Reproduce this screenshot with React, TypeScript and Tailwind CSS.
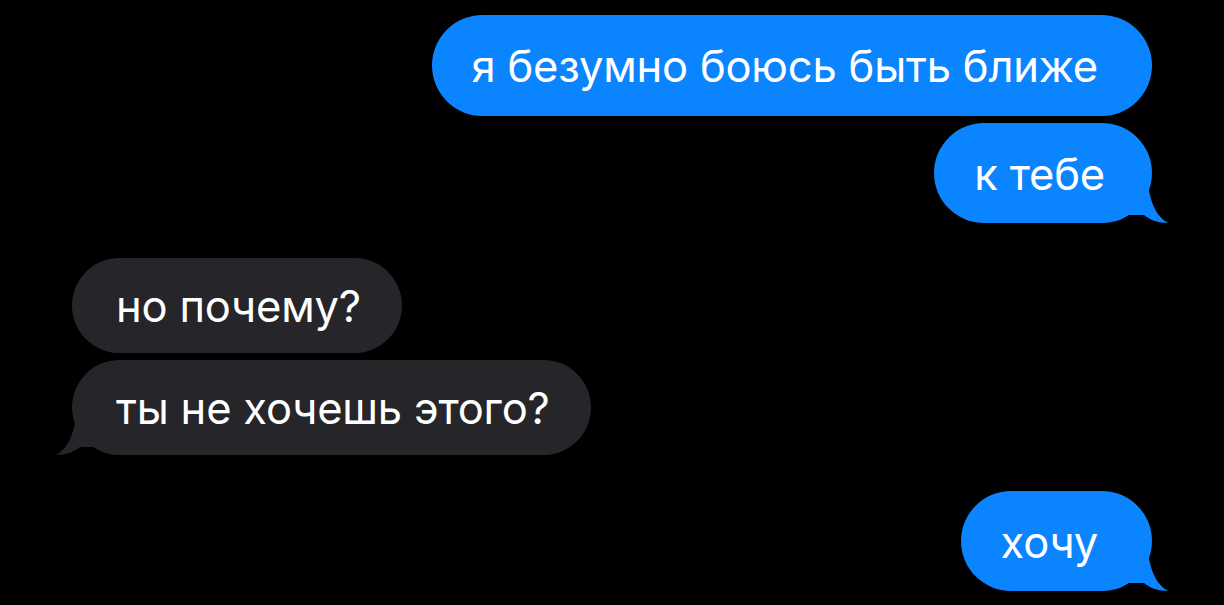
import React from 'react';

type Side = 'out' | 'in';

function Tail({ side }: { side: Side }) {
    const fill = side === 'out' ? '#0a84ff' : '#262529';
    return (
        <svg
            width="60"
            height="40"
            viewBox="0 0 60 40"
            className={
                side === 'out'
                    ? 'absolute bottom-0 right-[-18px]'
                    : 'absolute bottom-0 left-[-18px] -scale-x-100'
            }
        >
            <path d="M38 2 C41 22 47 34 58 40 C48 40 40 37 34 32 L10 32 L10 2 Z" fill={fill} />
        </svg>
    );
}

function Bubble({ text, side, tail, tall, pr }: { text: string; side: Side; tail?: boolean; tall?: boolean; pr?: number }) {
    const out = side === 'out';
    return (
        <div
            className={
                out
                    ? 'relative self-end flex items-center rounded-full bg-[#0a84ff] pl-[40px] pr-[54px] text-white'
                    : 'relative self-start flex items-center rounded-full bg-[#262529] pl-[44px] pr-[41px] text-white'
            }
            style={{ height: tall ? 101 : out ? 100 : 95, paddingRight: pr }}
        >
            {tail && <Tail side={side} />}
            <span className="relative whitespace-nowrap pt-[3px] font-['Inter',sans-serif] text-[43.5px] leading-none tracking-[-0.2px]">
                {text}
            </span>
        </div>
    );
}

export default function App() {
    return (
        <div className="flex h-[605px] w-full flex-col overflow-hidden bg-black px-[72px] pt-[15px]">
            <div className="flex flex-col gap-[7px]">
                <Bubble text="я безумно боюсь быть ближе" side="out" tall />
                <Bubble text="к тебе" side="out" tail pr={47} />
            </div>
            <div className="mt-[35px] flex flex-col gap-[7px]">
                <Bubble text="но почему?" side="in" />
                <Bubble text="ты не хочешь этого?" side="in" tail />
            </div>
            <div className="mt-[36px] flex flex-col">
                <Bubble text="хочу" side="out" tail />
            </div>
        </div>
    );
}
